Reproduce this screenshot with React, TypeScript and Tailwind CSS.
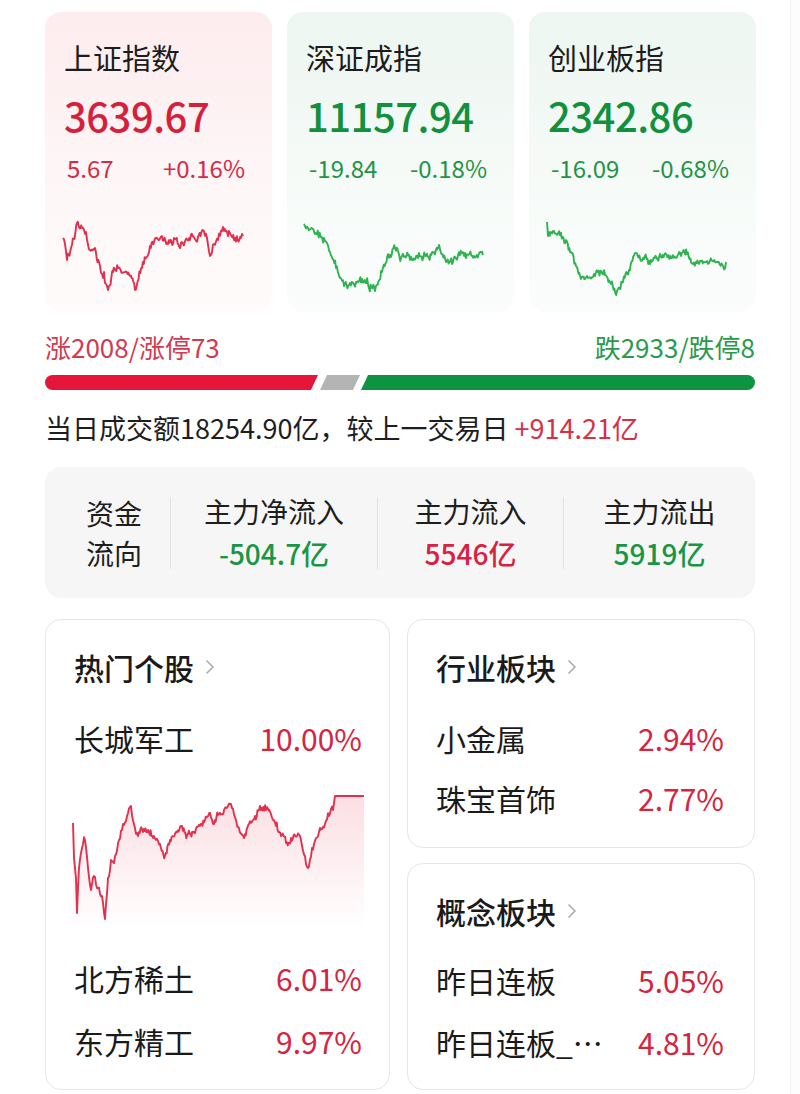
import React from "react";

type Pt = [number, number, number?];

// deterministic noise so the sparklines look the same every render
function rng(seed: number) {
  return () => {
    seed |= 0;
    seed = (seed + 0x6d2b79f5) | 0;
    let t = Math.imul(seed ^ (seed >>> 15), 1 | seed);
    t = (t + Math.imul(t ^ (t >>> 7), 61 | t)) ^ t;
    return ((t ^ (t >>> 14)) >>> 0) / 4294967296;
  };
}

function jagged(pts: Pt[], seed: number, amp: number, ox: number, oy: number) {
  const r = rng(seed);
  const out: string[] = [];
  let drift = 0;
  for (let i = 0; i < pts.length - 1; i++) {
    const [x0, y0] = pts[i];
    const [x1, y1, a] = pts[i + 1];
    const segAmp = a ?? amp;
    const n = Math.max(1, Math.round((x1 - x0) / 0.9));
    for (let k = 0; k < n; k++) {
      const t = k / n;
      const x = x0 + (x1 - x0) * t;
      drift = segAmp === 0 ? 0 : drift * 0.7 + (r() - 0.5) * segAmp * 1.6;
      const spike = segAmp === 0 ? 0 : (r() - 0.5) * segAmp * 1.6;
      const y = y0 + (y1 - y0) * t + (k === 0 ? 0 : drift + spike);
      out.push(`${(x - ox).toFixed(1)},${(y - oy).toFixed(1)}`);
    }
  }
  const last = pts[pts.length - 1];
  out.push(`${(last[0] - ox).toFixed(1)},${(last[1] - oy).toFixed(1)}`);
  return "M" + out.join("L");
}

const shPts: Pt[] = [
  [63, 238], [65, 244], [67, 260], [72, 245], [77, 223], [82, 228], [86, 232], [90, 250], [95, 248],
  [100, 266], [104, 272], [108, 290], [113, 272], [118, 268], [125, 272], [130, 276], [135, 290],
  [142, 268], [150, 246], [156, 238], [162, 236], [168, 244], [174, 238], [182, 242], [190, 240],
  [198, 237], [203, 230], [207, 238], [210, 256], [214, 244], [218, 240], [222, 231], [228, 236],
  [235, 238], [243, 236],
];
const szPts: Pt[] = [
  [304, 224], [308, 228], [316, 233], [324, 238], [330, 252], [336, 268], [344, 286], [350, 283],
  [356, 282], [362, 279], [368, 284], [375, 291], [382, 272], [390, 255], [395, 248], [402, 256],
  [410, 260], [418, 258], [426, 256], [434, 252], [440, 249], [446, 262], [452, 264], [458, 255],
  [466, 258], [474, 256], [483, 255],
];
const cyPts: Pt[] = [
  [546, 222], [547, 236], [552, 231], [560, 233], [565, 240], [570, 252], [575, 266], [580, 279],
  [586, 276], [594, 276], [604, 275], [610, 284], [616, 291], [622, 282], [628, 270], [634, 253],
  [642, 258], [650, 260], [660, 257], [670, 258], [680, 256], [686, 254], [692, 264], [700, 261],
  [708, 263], [716, 262], [725, 262],
];
const bigPts: Pt[] = [
  [73, 825], [74, 860], [76, 880], [77, 915], [79, 870], [82, 850], [85, 842], [88, 870],
  [91, 892], [94, 878], [97, 890], [100, 896], [103, 905], [105, 921], [108, 880], [111, 862],
  [115, 858], [119, 842], [123, 826], [127, 818], [131, 808], [134, 826], [138, 838], [143, 834],
  [148, 832], [154, 838], [160, 846], [165, 858], [170, 842], [176, 834], [182, 828], [188, 836],
  [194, 834], [200, 828], [205, 822], [210, 815], [214, 826], [219, 816], [225, 810], [230, 806],
  [234, 816], [239, 830], [244, 840], [249, 826], [255, 818], [260, 808], [266, 812], [271, 816],
  [276, 828], [281, 838], [286, 845], [291, 840], [297, 838], [301, 842], [305, 858], [308, 870],
  [312, 850], [316, 840], [320, 830], [325, 826], [329, 818], [333, 812], [335, 798, 0],
  [364, 798, 0],
];

function Chevron() {
  return (
    <svg width="12" height="20" viewBox="0 0 12 20" className="shrink-0">
      <polyline points="3,4 9,10 3,16" fill="none" stroke="#adadad" strokeWidth="1.7" strokeLinecap="round" strokeLinejoin="round" />
    </svg>
  );
}

function IndexCard({
  name, price, change, pct, up, pts, seed, ox,
}: { name: string; price: string; change: string; pct: string; up: boolean; pts: Pt[]; seed: number; ox: number }) {
  const color = up ? "text-[#d61f3c]" : "text-[#11903d]";
  const sub = up ? "text-[#d42c46]" : "text-[#1f9446]";
  return (
    <div
      className={
        "flex h-[300px] w-[227px] flex-col rounded-2xl px-[19px] pt-[28px] " +
        (up ? "bg-gradient-to-b from-[#fdecee] via-[#fdf5f6] to-[#fffbfb]" : "bg-gradient-to-b from-[#edf6f1] via-[#f5faf7] to-[#fbfdfc]")
      }
    >
      <div className="text-[29px] leading-[34px] text-[#1c1c1c]">{name}</div>
      <div className={"mt-[17px] text-[40px] leading-[48px] font-medium tracking-[-0.5px] " + color}>{price}</div>
      <div className={"mt-[14px] flex justify-between pl-[3px] pr-[8px] text-[24px] leading-[30px] " + sub}>
        <span>{change}</span>
        <span>{pct}</span>
      </div>
      <svg width="190" height="90" className="mt-[29px] overflow-visible">
        <path d={jagged(pts, seed, 3.2, ox, 212)} fill="none" stroke={up ? "#e0304e" : "#2fb350"} strokeWidth="1.9" strokeLinejoin="round" />
      </svg>
    </div>
  );
}

function Row({ name, pct, className = "" }: { name: string; pct: string; className?: string }) {
  return (
    <div className={"flex items-center justify-between text-[30px] leading-[40px] " + className}>
      <span className="text-[#1a1a1a]">{name}</span>
      <span className="text-[#d5243f]">{pct}</span>
    </div>
  );
}

function Title({ text }: { text: string }) {
  return (
    <div className="flex items-center gap-[10px] text-[30px] leading-[38px] font-medium text-[#1a1a1a]">
      <span>{text}</span>
      <Chevron />
    </div>
  );
}

export default function App() {
  const bigLine = jagged(bigPts, 7, 3.2, 74, 790);
  const bigFill = bigLine + `L${364 - 74},140L${73 - 74},140Z`;
  return (
    <div className="flex min-h-[1094px] w-[800px] bg-white font-['Noto_Sans_CJK_SC','Noto_Sans',sans-serif]">
      <main className="w-[790px] pl-[45px] pr-[35px] pt-[12px] pb-[4px]">
        {/* index cards */}
        <div className="flex gap-[15px]">
          <IndexCard name="上证指数" price="3639.67" change="5.67" pct="+0.16%" up pts={shPts} seed={3} ox={64} />
          <IndexCard name="深证成指" price="11157.94" change="-19.84" pct="-0.18%" up={false} pts={szPts} seed={11} ox={306} />
          <IndexCard name="创业板指" price="2342.86" change="-16.09" pct="-0.68%" up={false} pts={cyPts} seed={23} ox={547} />
        </div>

        {/* breadth */}
        <div className="mt-[19px] flex justify-between text-[26px] leading-[32px]">
          <span className="text-[#d33a4e]">涨2008/涨停73</span>
          <span className="text-[#2b9a4c]">跌2933/跌停8</span>
        </div>
        <svg width="710" height="15" viewBox="0 0 710 15" className="mt-[12px] block">
          <path d="M7.5,0 H273 L266,15 H7.5 A7.5,7.5 0 0 1 7.5,0 Z" fill="#e6163b" />
          <path d="M282,0 H315 L308,15 H275 Z" fill="#b4b4b4" />
          <path d="M323,0 H702.5 A7.5,7.5 0 0 1 702.5,15 H316 Z" fill="#0d9342" />
        </svg>
        <div className="mt-[21px] text-[27px] leading-[34px] text-[#1e1e1e]">
          当日成交额18254.90亿，较上一交易日 <span className="text-[#d63049]">+914.21亿</span>
        </div>

        {/* fund flow */}
        <div className="mt-[22px] flex h-[131px] items-center rounded-2xl bg-[#f6f6f6]">
          <div className="w-[125px] pl-[41px] text-[28px] leading-[40px] text-[#1e1e1e]">
            <div>资金</div>
            <div>流向</div>
          </div>
          <div className="h-[72px] w-px bg-[#e3e3e3]" />
          <div className="flex w-[206px] flex-col items-center">
            <span className="text-[28px] leading-[40px] text-[#1e1e1e]">主力净流入</span>
            <span className="text-[28px] leading-[44px] font-medium text-[#189645]">-504.7亿</span>
          </div>
          <div className="h-[72px] w-px bg-[#e3e3e3]" />
          <div className="flex w-[185px] flex-col items-center">
            <span className="text-[28px] leading-[40px] text-[#1e1e1e]">主力流入</span>
            <span className="text-[28px] leading-[44px] font-medium text-[#d8213e]">5546亿</span>
          </div>
          <div className="h-[72px] w-px bg-[#e3e3e3]" />
          <div className="flex flex-1 flex-col items-center">
            <span className="text-[28px] leading-[40px] text-[#1e1e1e]">主力流出</span>
            <span className="text-[28px] leading-[44px] font-medium text-[#189645]">5919亿</span>
          </div>
        </div>

        {/* bottom cards */}
        <div className="mt-[21px] flex gap-[17px]">
          <div className="h-[471px] w-[345px] rounded-2xl border border-[#e6e6e6] pl-[28px] pr-[27px] pt-[28px]">
            <Title text="热门个股" />
            <Row name="长城军工" pct="10.00%" className="mt-[32px]" />
            <svg width="291" height="140" className="mt-[30px] block overflow-visible">
              <defs>
                <linearGradient id="bigfill" x1="0" y1="0" x2="0" y2="1">
                  <stop offset="0" stopColor="#e8334f" stopOpacity="0.16" />
                  <stop offset="1" stopColor="#e8334f" stopOpacity="0" />
                </linearGradient>
              </defs>
              <path d={bigFill} fill="url(#bigfill)" />
              <path d={bigLine} fill="none" stroke="#e2304d" strokeWidth="1.9" strokeLinejoin="round" />
            </svg>
            <Row name="北方稀土" pct="6.01%" className="mt-[30px]" />
            <Row name="东方精工" pct="9.97%" className="mt-[23px]" />
          </div>

          <div className="flex flex-1 flex-col gap-[15px]">
            <div className="h-[229px] rounded-2xl border border-[#e6e6e6] pl-[28px] pr-[30px] pt-[28px]">
              <Title text="行业板块" />
              <Row name="小金属" pct="2.94%" className="mt-[32px]" />
              <Row name="珠宝首饰" pct="2.77%" className="mt-[20px]" />
            </div>
            <div className="h-[227px] rounded-2xl border border-[#e6e6e6] pl-[28px] pr-[30px] pt-[28px]">
              <Title text="概念板块" />
              <Row name="昨日连板" pct="5.05%" className="mt-[30px]" />
              <Row name="昨日连板_…" pct="4.81%" className="mt-[22px]" />
            </div>
          </div>
        </div>
      </main>
      <div className="flex-1 border-l border-[#f1f1f1] bg-[#fdfdfd]" />
    </div>
  );
}
